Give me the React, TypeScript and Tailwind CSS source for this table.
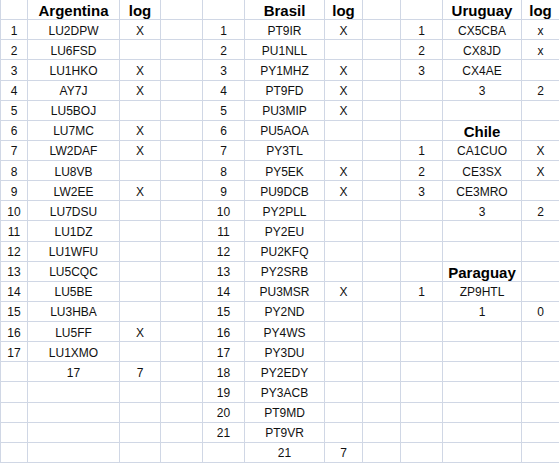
import type { ReactNode } from "react";

type Cell = { text?: string; bold?: boolean };

const ROWS = 23;
const COLS = 11;

const argentina = [
  ["LU2DPW", "X"],
  ["LU6FSD", ""],
  ["LU1HKO", "X"],
  ["AY7J", "X"],
  ["LU5BOJ", ""],
  ["LU7MC", "X"],
  ["LW2DAF", "X"],
  ["LU8VB", ""],
  ["LW2EE", "X"],
  ["LU7DSU", ""],
  ["LU1DZ", ""],
  ["LU1WFU", ""],
  ["LU5CQC", ""],
  ["LU5BE", ""],
  ["LU3HBA", ""],
  ["LU5FF", "X"],
  ["LU1XMO", ""],
];

const brasil = [
  ["PT9IR", "X"],
  ["PU1NLL", ""],
  ["PY1MHZ", "X"],
  ["PT9FD", "X"],
  ["PU3MIP", "X"],
  ["PU5AOA", ""],
  ["PY3TL", ""],
  ["PY5EK", "X"],
  ["PU9DCB", "X"],
  ["PY2PLL", ""],
  ["PY2EU", ""],
  ["PU2KFQ", ""],
  ["PY2SRB", ""],
  ["PU3MSR", "X"],
  ["PY2ND", ""],
  ["PY4WS", ""],
  ["PY3DU", ""],
  ["PY2EDY", ""],
  ["PY3ACB", ""],
  ["PT9MD", ""],
  ["PT9VR", ""],
];

// small country blocks stacked in the right columns
const rightBlocks = [
  { row: 0, title: "Uruguay", showLog: true, list: [["CX5CBA", "x"], ["CX8JD", "x"], ["CX4AE", ""]], total: ["3", "2"] },
  { row: 6, title: "Chile", showLog: false, list: [["CA1CUO", "X"], ["CE3SX", "X"], ["CE3MRO", ""]], total: ["3", "2"] },
  { row: 13, title: "Paraguay", showLog: false, list: [["ZP9HTL", ""]], total: ["1", "0"] },
];

function buildSheet(): Cell[][] {
  const sheet: Cell[][] = Array.from({ length: ROWS }, () =>
    Array.from({ length: COLS }, () => ({}))
  );
  const put = (r: number, c: number, text: string, bold = false) => {
    sheet[r][c] = { text, bold };
  };

  put(0, 1, "Argentina", true);
  put(0, 2, "log", true);
  argentina.forEach(([call, log], i) => {
    put(i + 1, 0, String(i + 1));
    put(i + 1, 1, call);
    put(i + 1, 2, log);
  });
  put(argentina.length + 1, 1, "17");
  put(argentina.length + 1, 2, "7");

  put(0, 5, "Brasil", true);
  put(0, 6, "log", true);
  brasil.forEach(([call, log], i) => {
    put(i + 1, 4, String(i + 1));
    put(i + 1, 5, call);
    put(i + 1, 6, log);
  });
  put(brasil.length + 1, 5, "21");
  put(brasil.length + 1, 6, "7");

  rightBlocks.forEach((b) => {
    put(b.row, 9, b.title, true);
    if (b.showLog) put(b.row, 10, "log", true);
    b.list.forEach(([call, log], i) => {
      put(b.row + i + 1, 8, String(i + 1));
      put(b.row + i + 1, 9, call);
      put(b.row + i + 1, 10, log);
    });
    put(b.row + b.list.length + 1, 9, b.total[0]);
    put(b.row + b.list.length + 1, 10, b.total[1]);
  });

  return sheet;
}

function SheetCell({ cell }: { cell: Cell }): ReactNode {
  return (
    <div className="flex items-center justify-center overflow-hidden whitespace-nowrap border-r border-b border-[#d0d7e5] pt-[2px]">
      {cell.text ? (
        <span
          className={
            cell.bold
              ? "text-[15px] font-bold leading-none text-black"
              : "text-[12px] leading-none text-[#111]"
          }
        >
          {cell.text}
        </span>
      ) : null}
    </div>
  );
}

export default function App() {
  const sheet = buildSheet();

  return (
    <div
      className="h-[463px] w-[559px] overflow-hidden bg-white"
      style={{ fontFamily: '"Liberation Sans", Arial, sans-serif' }}
    >
      <div className="grid grid-cols-[27px_92px_41px_42px_42px_80px_38px_38px_42px_79px_38px] auto-rows-[20.13px] border-l border-[#d0d7e5]">
        {sheet.map((row, r) =>
          row.map((cell, c) => <SheetCell key={`${r}-${c}`} cell={cell} />)
        )}
      </div>
    </div>
  );
}
